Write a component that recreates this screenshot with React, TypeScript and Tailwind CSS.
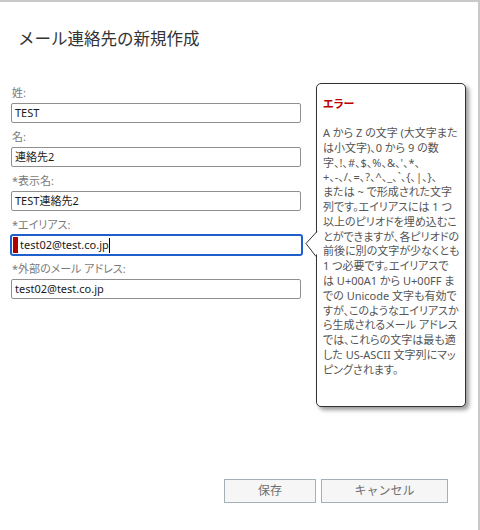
import React from "react";

const FONT = { fontFamily: '"Noto Sans", "Noto Sans CJK JP", sans-serif' };

function Field({
  label,
  value,
  focused,
}: {
  label: string;
  value: string;
  focused?: boolean;
}) {
  return (
    <div className="flex flex-col mb-[6px]">
      <div className="h-[16px] leading-[16px] text-[11px] text-[#7a7a7a] mb-[2px] pl-[1px] [font-feature-settings:'palt']">
        {label}
      </div>
      {focused ? (
        <div className="h-[20px] w-[291px] flex items-center rounded-[2px] border border-[#1f5fcc] shadow-[0_0_0_1px_#1f5fcc] bg-white">
          <div className="w-[5px] h-[16px] bg-[#b00000] ml-[1px]" />
          <span className="text-[11px] text-[#1a1a1a] leading-[16px] pl-[2px]">{value}</span>
          <span className="w-[1px] h-[15px] bg-black" />
        </div>
      ) : (
        <div className="h-[20px] w-[290px] flex items-center rounded-[2px] border border-[#8f8f8f] bg-white px-[3px]">
          <span className="text-[11px] text-[#1a1a1a] leading-[16px]">{value}</span>
        </div>
      )}
    </div>
  );
}

const lines = [
  "A から Z の文字 (大文字また",
  "は小文字)、0 から 9 の数",
  "字、!、#、$、%、&、'、*、",
  "+、-、/、=、?、^、_、`、{、|、}、",
  "または ~ で形成された文字",
  "列です。エイリアスには 1 つ",
  "以上のピリオドを埋め込むこ",
  "とができますが、各ピリオドの",
  "前後に別の文字が少なくとも",
  "1 つ必要です。エイリアスで",
  "は U+00A1 から U+00FF ま",
  "での Unicode 文字も有効で",
  "すが、このようなエイリアスか",
  "ら生成されるメール アドレス",
  "では、これらの文字は最も適",
  "した US-ASCII 文字列にマッ",
  "ピングされます。",
];

export default function App() {
  return (
    <div
      className="relative w-[480px] h-[530px] bg-white border-t-2 border-t-[#c9c9c9] border-r-2 border-r-[#c9c9c9] flex flex-col overflow-hidden"
      style={FONT}
    >
      <div className="absolute right-[-2px] top-0 w-[2px] h-[19px] bg-[#3a3a3a]" />
      <h1 className="pl-[18px] pt-[27px] text-[16.5px] leading-[20px] text-[#333333] font-normal">
        メール連絡先の新規作成
      </h1>
      <div className="pl-[11px] mt-[36px] flex flex-col">
        <Field label="姓:" value="TEST" />
        <Field label="名:" value="連絡先2" />
        <Field label="*表示名:" value="TEST連絡先2" />
        <Field label="*エイリアス:" value="test02@test.co.jp" focused />
        <Field label="*外部のメール アドレス:" value="test02@test.co.jp" />
      </div>

      <div className="mt-auto mb-[27px] flex justify-end gap-[5px] pr-[30px]">
        <button className="w-[92px] h-[24px] border border-[#a3b0b5] bg-[#f6f6f6] text-[12px] text-[#707070]">
          保存
        </button>
        <button className="w-[127px] h-[24px] border border-[#a3b0b5] bg-[#f6f6f6] text-[12px] text-[#707070]">
          キャンセル
        </button>
      </div>

      {/* error callout */}
      <div className="absolute left-[316px] top-[81px] w-[150px] h-[324px] bg-white border border-[#333333] rounded-[5px] shadow-[3px_3px_4px_rgba(0,0,0,0.4)] pl-[6px] pt-[12px]">
        <svg
          className="absolute left-[-12px] top-[147px]"
          width="13"
          height="26"
          viewBox="0 0 13 26"
        >
          <polygon points="13,0 1,12.5 13,25" fill="white" />
          <polyline points="12,0.5 1,12.5 11,25.5" fill="none" stroke="#333333" strokeWidth="1" />
        </svg>
        <div className="text-[11px] leading-[15px] font-bold text-[#c00000] [font-feature-settings:'palt']">
          エラー
        </div>
        <div className="mt-[15px] text-[11px] leading-[14.8px] text-[#555555] [font-feature-settings:'palt']">
          {lines.map((l, i) => (
            <div key={i} className="whitespace-nowrap">
              {l}
            </div>
          ))}
        </div>
      </div>
    </div>
  );
}
